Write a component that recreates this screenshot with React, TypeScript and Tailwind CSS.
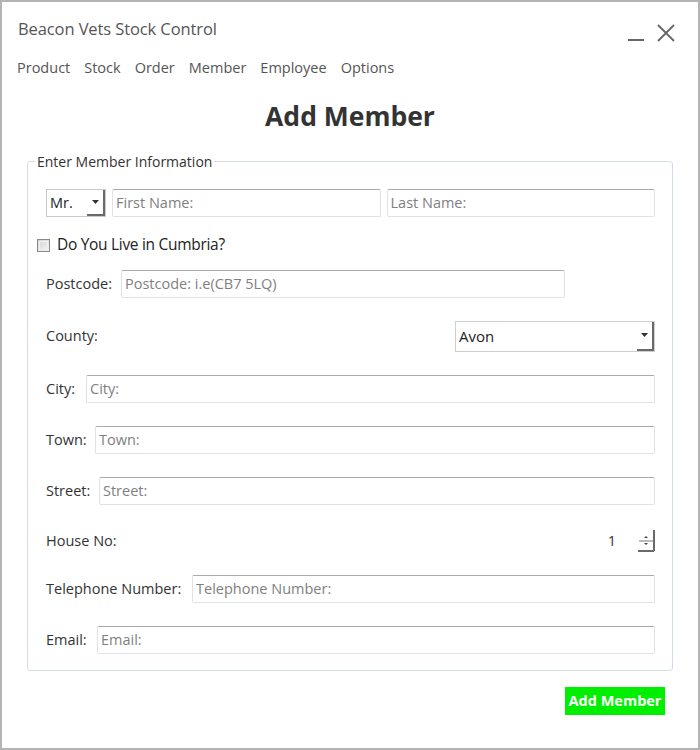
import React from "react";

const font = { fontFamily: '"Open Sans", "Noto Sans", sans-serif' };

function TextInput({ placeholder, className = "" }: { placeholder: string; className?: string }) {
  return (
    <div
      className={
        "h-[28px] border border-[#e1e2e8] border-t-[#a9a9b0] rounded-[2px] flex items-center pl-[3px] text-[14.5px] text-[#7a7a7a] bg-white " +
        className
      }
    >
      <input
        placeholder={placeholder}
        className="w-full outline-none bg-transparent placeholder:text-[#7f7f7f] text-[14.5px]"
        style={font}
      />
    </div>
  );
}

function Arrow() {
  return (
    <svg width="7" height="4" viewBox="0 0 7 4">
      <path d="M0 0 H7 L3.5 4 Z" fill="#333" />
    </svg>
  );
}

function Label({ children, className = "" }: { children: React.ReactNode; className?: string }) {
  return <span className={"text-[14.5px] text-[#333] whitespace-nowrap " + className}>{children}</span>;
}

export default function App() {
  return (
    <div
      className="w-[700px] h-[750px] border-2 border-[#b4b4b4] bg-white flex flex-col text-[#333]"
      style={font}
    >
      {/* Title bar */}
      <div className="h-[54px] flex items-center justify-between pl-[16px] pr-[23px]">
        <span className="text-[16.5px] text-[#555] tracking-[-0.1px]">Beacon Vets Stock Control</span>
        <div className="flex items-end gap-[13px] pt-[8px]">
          <div className="w-[16px] h-[16px] flex items-end">
            <div className="w-[16px] h-[2px] bg-[#666] mb-[1px]" />
          </div>
          <svg width="18" height="18" viewBox="0 0 18 18">
            <path d="M1 1 L17 17 M17 1 L1 17" stroke="#666" strokeWidth="1.8" />
          </svg>
        </div>
      </div>

      {/* Menu */}
      <div className="h-[24px] flex items-center gap-[14px] pl-[15px] text-[14.5px] text-[#555]">
        <span>Product</span>
        <span>Stock</span>
        <span>Order</span>
        <span>Member</span>
        <span>Employee</span>
        <span>Options</span>
      </div>

      {/* Heading */}
      <div className="mt-[20px] h-[34px] flex items-center justify-center">
        <span className="text-[26.5px] font-bold text-[#333]">Add Member</span>
      </div>

      {/* Group box */}
      <div className="relative mt-[27px] mx-[25px] border border-[#d4dde6] rounded-[3px] pl-[18px] pr-[17px] pb-[16px] flex flex-col">
        <span className="absolute -top-[11px] left-[7px] bg-white px-[2px] text-[14px] text-[#333]">
          Enter Member Information
        </span>

        {/* Row 1 */}
        <div className="mt-[27px] h-[28px] flex items-center gap-[6px]">
          <div className="w-[60px] h-[28px] border border-[#c9c9c9] flex items-center justify-between pl-[3px] bg-white">
            <span className="text-[14.5px] text-[#222]">Mr.</span>
            <div className="h-full w-[18px] flex items-center justify-center border-r-2 border-b-2 border-r-[#6a6a6a] border-b-[#6a6a6a]">
              <Arrow />
            </div>
          </div>
          <TextInput placeholder="First Name:" className="flex-1" />
          <TextInput placeholder="Last Name:" className="flex-1" />
        </div>

        {/* Checkbox */}
        <div className="mt-[15px] h-[26px] flex items-center -ml-[9px] gap-[7px]">
          <div className="w-[13px] h-[13px] border border-[#8a8a8a] bg-gradient-to-br from-[#d4d4d4] to-[#f4f4f4] p-[1px]">
            <div className="w-full h-full border border-[#f0f0f0]" />
          </div>
          <span className="text-[15.5px] text-[#222] tracking-[-0.3px]">Do You Live in Cumbria?</span>
        </div>

        {/* Postcode */}
        <div className="mt-[12px] h-[28px] flex items-center">
          <Label className="w-[75px]">Postcode:</Label>
          <TextInput placeholder="Postcode: i.e(CB7 5LQ)" className="w-[444px]" />
        </div>

        {/* County */}
        <div className="mt-[22px] h-[32px] flex items-center justify-between">
          <Label>County:</Label>
          <div className="w-[200px] h-[31px] border border-[#cfcfcf] flex items-center justify-between pl-[3px] bg-white">
            <span className="text-[15px] text-[#222]">Avon</span>
            <div className="h-[29px] w-[17px] flex items-center justify-center border-r-2 border-b-2 border-r-[#6a6a6a] border-b-[#6a6a6a]">
              <Arrow />
            </div>
          </div>
        </div>

        {/* City */}
        <div className="mt-[23px] h-[28px] flex items-center">
          <Label className="w-[40px]">City:</Label>
          <TextInput placeholder="City:" className="flex-1" />
        </div>

        {/* Town */}
        <div className="mt-[23px] h-[28px] flex items-center">
          <Label className="w-[49px]">Town:</Label>
          <TextInput placeholder="Town:" className="flex-1" />
        </div>

        {/* Street */}
        <div className="mt-[23px] h-[28px] flex items-center">
          <Label className="w-[53px]">Street:</Label>
          <TextInput placeholder="Street:" className="flex-1" />
        </div>

        {/* House No */}
        <div className="mt-[22px] h-[28px] flex items-center justify-between">
          <Label>House No:</Label>
          <div className="flex items-center gap-[22px]">
            <span className="text-[14.5px] text-[#333]">1</span>
            <svg width="17" height="22" viewBox="0 0 17 22">
              <path d="M8 6 L10 8 H6 Z" fill="#444" />
              <path d="M6 13 H10 L8 15 Z" fill="#444" />
              <path d="M1 11 H16" stroke="#777" strokeWidth="1" />
              <path d="M16 0 V21 M0 21 H16" stroke="#6a6a6a" strokeWidth="2" />
            </svg>
          </div>
        </div>

        {/* Telephone */}
        <div className="mt-[20px] h-[28px] flex items-center">
          <Label className="w-[146px]">Telephone Number:</Label>
          <TextInput placeholder="Telephone Number:" className="flex-1" />
        </div>

        {/* Email */}
        <div className="mt-[23px] h-[28px] flex items-center">
          <Label className="w-[51px]">Email:</Label>
          <TextInput placeholder="Email:" className="flex-1" />
        </div>
      </div>

      {/* Button */}
      <div className="mt-[16px] flex justify-end pr-[33px]">
        <button className="w-[100px] h-[28px] bg-[#00ee00] text-white font-bold text-[14.5px]">
          Add Member
        </button>
      </div>
    </div>
  );
}
